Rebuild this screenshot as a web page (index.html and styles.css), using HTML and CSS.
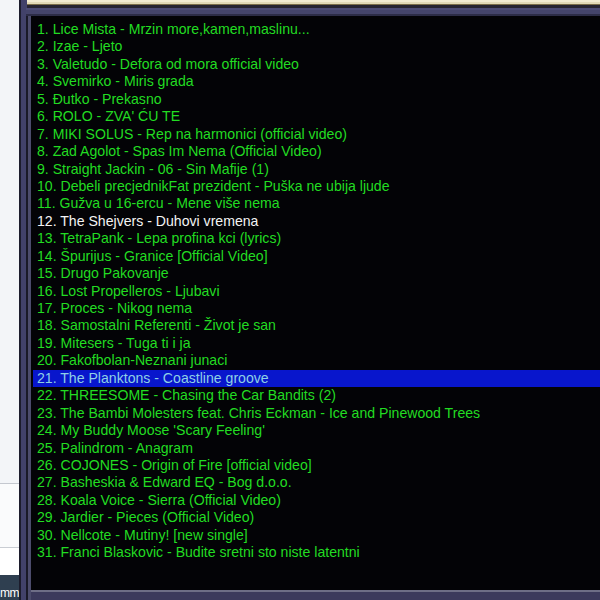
FILE: index.html
```html
<!DOCTYPE html>
<html>
<head>
<meta charset="utf-8">
<link rel="stylesheet" href="styles.css">
</head>
<body>
<div class="page">
  <div class="page-top"></div>
  <div class="page-mid"></div>
  <div class="page-low"></div>
  <div class="page-foot"><span>mm</span></div>
</div>
<div class="win">
  <div class="title"></div>
  <div class="band"></div>
  <div class="list">
    <div class="rows">
      <div class="row">1. Lice Mista - Mrzin more,kamen,maslinu...</div>
      <div class="row">2. Izae - Ljeto</div>
      <div class="row">3. Valetudo - Defora od mora official video</div>
      <div class="row">4. Svemirko - Miris grada</div>
      <div class="row">5. Đutko - Prekasno</div>
      <div class="row">6. ROLO - ZVA' ĆU TE</div>
      <div class="row">7. MIKI SOLUS - Rep na harmonici (official video)</div>
      <div class="row">8. Zad Agolot - Spas Im Nema (Official Video)</div>
      <div class="row">9. Straight Jackin - 06 - Sin Mafije (1)</div>
      <div class="row">10. Debeli precjednikFat prezident - Puška ne ubija ljude</div>
      <div class="row">11. Gužva u 16-ercu - Mene više nema</div>
      <div class="row current">12. The Shejvers - Duhovi vremena</div>
      <div class="row">13. TetraPank - Lepa profina kci (lyrics)</div>
      <div class="row">14. Špurijus - Granice [Official Video]</div>
      <div class="row">15. Drugo Pakovanje</div>
      <div class="row">16. Lost Propelleros - Ljubavi</div>
      <div class="row">17. Proces - Nikog nema</div>
      <div class="row">18. Samostalni Referenti - Život je san</div>
      <div class="row">19. Mitesers - Tuga ti i ja</div>
      <div class="row">20. Fakofbolan-Neznani junaci</div>
      <div class="row selected">21. The Planktons - Coastline groove</div>
      <div class="row">22. THREESOME - Chasing the Car Bandits (2)</div>
      <div class="row">23. The Bambi Molesters feat. Chris Eckman - Ice and Pinewood Trees</div>
      <div class="row">24. My Buddy Moose 'Scary Feeling'</div>
      <div class="row">25. Palindrom - Anagram</div>
      <div class="row">26. COJONES - Origin of Fire [official video]</div>
      <div class="row">27. Basheskia &amp; Edward EQ - Bog d.o.o.</div>
      <div class="row">28. Koala Voice - Sierra (Official Video)</div>
      <div class="row">29. Jardier - Pieces (Official Video)</div>
      <div class="row">30. Nellcote - Mutiny! [new single]</div>
      <div class="row">31. Franci Blaskovic - Budite sretni sto niste latentni</div>
    </div>
    <div class="bottom"></div>
  </div>
</div>
</body>
</html>
```
FILE: styles.css
```css
html, body {
  margin: 0;
  padding: 0;
}
body {
  width: 600px;
  height: 600px;
  overflow: hidden;
  display: flex;
  background: #000;
  font-family: "Liberation Sans", Arial, sans-serif;
}
.page {
  width: 19px;
  flex: none;
  display: flex;
  flex-direction: column;
  background: #f3f5f8;
}
.page-top {
  height: 483px;
  border-bottom: 1px solid #c4c8cf;
}
.page-mid {
  height: 63px;
  background: #fafbfc;
  border-bottom: 1px solid #c9cdd3;
}
.page-low {
  flex: 1;
  background: #ffffff;
}
.page-foot {
  height: 25px;
  background: #2f3f50;
  display: flex;
  justify-content: flex-end;
  align-items: flex-end;
  overflow: hidden;
}
.page-foot span {
  color: #fff;
  font-size: 12px;
  line-height: 12px;
  padding-bottom: 1px;
  letter-spacing: -0.5px;
  white-space: nowrap;
}
.win {
  flex: 1;
  display: flex;
  flex-direction: column;
  background: #42426a;
  border-left: 2px solid #1c1c2c;
  padding-left: 5px;
  min-width: 0;
}
.title {
  height: 8px;
  margin-left: 1px;
  background: linear-gradient(#f2ecd2 0 2px, #e2dab8 2px 4px, #7a6e4a 4px 5px, #262432 5px 8px);
}
.band {
  height: 8px;
  background: linear-gradient(#4c4c76 0 2px, #44446a 2px 6px, #2c2c46 6px 8px);
}
.list {
  flex: 1;
  display: flex;
  flex-direction: column;
  background: #030306;
  border-left: 2px solid #1a1a28;
  box-shadow: inset 3px 0 0 #4c4c6c;
  padding-left: 5px;
  min-height: 0;
}
.rows {
  flex: 1;
  padding-top: 5px;
}
.row {
  height: 17.45px;
  line-height: 17.45px;
  padding-left: 4px;
  font-size: 14.1px;
  color: #22dc22;
  white-space: nowrap;
  overflow: hidden;
}
.row.current {
  color: #f4f4f4;
}
.row.selected {
  background: #0816cc;
  color: #8fd0e6;
}
.bottom {
  height: 8px;
  margin-left: -2px;
  border-top: 2px solid #6e6e86;
  background: #3c3a5c;
}
```
